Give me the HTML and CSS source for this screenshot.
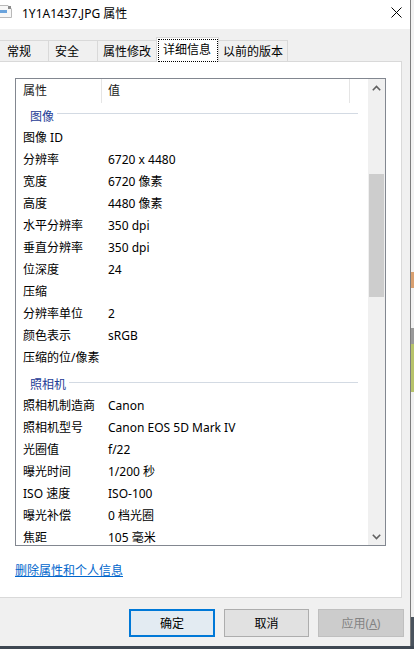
FILE: index.html
```html
<!DOCTYPE html>
<html lang="zh-CN">
<head>
<meta charset="utf-8">
<title>1Y1A1437.JPG 属性</title>
<link rel="stylesheet" href="styles.css">
</head>
<body>
<div class="screen">
  <div class="window">
    <div class="dialog">
      <div class="titlebar">
        <svg class="ticon" width="14" height="13" viewBox="0 0 14 13">
          <path d="M0.5 0.5 H10 L13.5 4 V12.5 H0.5 Z" fill="#f7f7f7" stroke="#b9b9b9"/>
          <rect x="0" y="5" width="9" height="3" fill="#6aa3dc"/>
          <rect x="10" y="1" width="3" height="3" fill="#8a8a8a"/>
        </svg>
        <span class="title">1Y1A1437.JPG 属性</span>
        <svg class="close" width="11" height="11" viewBox="0 0 11 11">
          <path d="M0.5 0.5 L10.5 10.5 M10.5 0.5 L0.5 10.5" stroke="#000" stroke-width="1" fill="none"/>
        </svg>
      </div>
      <div class="client">
        <div class="tabs">
          <div class="tab t1">常规</div>
          <div class="tab t2">安全</div>
          <div class="tab t3">属性修改</div>
          <div class="tab sel"><span class="focus">详细信息</span></div>
          <div class="tab t5">以前的版本</div>
        </div>
        <div class="panel">
          <div class="list">
            <div class="list-body">
              <div class="hdr">
                <div class="hc1">属性</div>
                <div class="hc2">值</div>
              </div>
              <div class="group g1"><span>图像</span><i class="gline"></i></div>
              <div class="row"><span class="k">图像 ID</span><span class="v"></span></div>
              <div class="row"><span class="k">分辨率</span><span class="v">6720 x 4480</span></div>
              <div class="row"><span class="k">宽度</span><span class="v">6720 像素</span></div>
              <div class="row"><span class="k">高度</span><span class="v">4480 像素</span></div>
              <div class="row"><span class="k">水平分辨率</span><span class="v">350 dpi</span></div>
              <div class="row"><span class="k">垂直分辨率</span><span class="v">350 dpi</span></div>
              <div class="row"><span class="k">位深度</span><span class="v">24</span></div>
              <div class="row"><span class="k">压缩</span><span class="v"></span></div>
              <div class="row"><span class="k">分辨率单位</span><span class="v">2</span></div>
              <div class="row"><span class="k">颜色表示</span><span class="v">sRGB</span></div>
              <div class="row"><span class="k">压缩的位/像素</span><span class="v"></span></div>
              <div class="group g2"><span>照相机</span><i class="gline"></i></div>
              <div class="row"><span class="k">照相机制造商</span><span class="v">Canon</span></div>
              <div class="row"><span class="k">照相机型号</span><span class="v">Canon EOS 5D Mark IV</span></div>
              <div class="row"><span class="k">光圈值</span><span class="v">f/22</span></div>
              <div class="row"><span class="k">曝光时间</span><span class="v">1/200 秒</span></div>
              <div class="row"><span class="k">ISO 速度</span><span class="v">ISO-100</span></div>
              <div class="row"><span class="k">曝光补偿</span><span class="v">0 档光圈</span></div>
              <div class="row"><span class="k">焦距</span><span class="v">105 毫米</span></div>
            </div>
            <div class="scroll">
              <div class="sbtn">
                <svg width="9" height="6" viewBox="0 0 9 6"><path d="M0.8 5.2 L4.5 1.5 L8.2 5.2" stroke="#606060" stroke-width="1.6" fill="none"/></svg>
              </div>
              <div class="thumb"></div>
              <div class="sbtn">
                <svg width="9" height="6" viewBox="0 0 9 6"><path d="M0.8 0.8 L4.5 4.5 L8.2 0.8" stroke="#606060" stroke-width="1.6" fill="none"/></svg>
              </div>
            </div>
          </div>
          <a class="link" href="#">删除属性和个人信息</a>
        </div>
        <div class="buttons">
          <div class="btn ok">确定</div>
          <div class="btn cancel">取消</div>
          <div class="btn apply">应用(<u>A</u>)</div>
        </div>
      </div>
    </div>
    <div class="desk"></div>
  </div>
  <div class="taskbar"></div>
</div>
</body>
</html>
```

FILE: styles.css
```css
* { box-sizing: border-box; }
html, body { margin: 0; padding: 0; }
body {
  width: 414px;
  height: 649px;
  overflow: hidden;
  font-family: "Noto Sans", "Noto Sans CJK SC", sans-serif;
  font-size: 12px;
  color: #000;
  background: #eeeeee;
}
.screen { display: flex; flex-direction: column; width: 414px; height: 649px; }
.window { display: flex; height: 646px; }
.dialog {
  width: 411px;
  height: 646px;
  border-right: 1px solid #7d7d7d;
  display: flex;
  flex-direction: column;
  background: #f0f0f0;
}
.desk {
  flex: 1;
  background: linear-gradient(to bottom,
    #f2f2f2 0, #f2f2f2 272px, #d9a070 272px, #d9a070 288px,
    #f2f2f2 288px, #f2f2f2 328px, #9a9a9a 328px, #9a9a9a 344px,
    #b7c36a 344px, #b7c36a 392px, #f0f0f0 392px, #f0f0f0 617px,
    #4a535d 617px);
}
.taskbar { height: 3px; background: #3e4752; }

/* title bar */
.titlebar {
  height: 29px;
  background: #fff;
  display: flex;
  align-items: flex-start;
  flex: none;
}
.ticon { margin-left: -2px; margin-top: 5px; flex: none; }
.title { margin-left: 10px; margin-top: 6px; line-height: 16px; }
.close { margin-left: auto; margin-right: 8px; margin-top: 7px; }

/* client */
.client { flex: 1; display: flex; flex-direction: column; }
.tabs {
  height: 32px;
  display: flex;
  align-items: flex-end;
  position: relative;
  z-index: 2;
  flex: none;
}
.tab {
  height: 21px;
  line-height: 18px;
  padding-top: 2px;
  border-top: 1px solid #d9d9d9;
  white-space: nowrap;
  background: #f0f0f0;
}
.t1 { width: 49px; padding-left: 7px; border-right: 1px solid #d9d9d9; }
.t2 { width: 49px; padding-left: 6px; border-right: 1px solid #d9d9d9; }
.t3 { width: 58px; padding-left: 5px; }
.t5 { width: 69px; padding-left: 4px; border-right: 1px solid #d9d9d9; }
.tab.sel {
  width: 63px;
  height: 25px;
  margin-bottom: -1px;
  background: #fff;
  border: 1px solid #d9d9d9;
  border-bottom: none;
  padding: 1px 0 0 1px;
}
.focus {
  display: block;
  width: 60px;
  height: 23px;
  border: 1px dotted #000;
  padding-left: 4px;
  padding-top: 2px;
  line-height: 16px;
}

/* panel */
.panel {
  height: 537px;
  margin-right: 8px;
  background: #fff;
  border: 1px solid #d9d9d9;
  border-left: none;
  padding-top: 16px;
  flex: none;
}
.list {
  margin-left: 15px;
  width: 371px;
  height: 468px;
  border: 1px solid #828790;
  display: flex;
}
.list-body { flex: 1; overflow: hidden; background: #fff; }
.hdr { display: flex; height: 24px; line-height: 22px; padding-top: 1px; color: #1a1a1a; }
.hc1 { width: 86px; padding-left: 7px; border-right: 1px solid #e5e5e5; margin-top: -1px; padding-top: 1px; }
.hc2 { width: 248px; padding-left: 6px; border-right: 1px solid #e5e5e5; margin-top: -1px; padding-top: 1px; }
.group {
  display: flex;
  align-items: center;
  padding-left: 14px;
  padding-bottom: 1px;
  line-height: 16px;
  color: #1e3c96;
}
.g1 { padding-top: 6px; }
.g2 { padding-top: 9px; }
.gline {
  flex: 1;
  height: 1px;
  background: #d3dae3;
  margin-left: 3px;
  margin-right: 10px;
}
.g1 .gline { margin-bottom: 7px; }
.g2 .gline { margin-bottom: 5px; }
.row { display: flex; height: 22px; line-height: 20px; padding-top: 2px; white-space: nowrap; }
.k { width: 86px; padding-left: 7px; flex: none; }
.v { padding-left: 6px; }

.scroll {
  width: 17px;
  flex: none;
  background: #f0f0f0;
  display: flex;
  flex-direction: column;
}
.sbtn {
  height: 17px;
  display: flex;
  align-items: center;
  justify-content: center;
  flex: none;
}
.scroll .thumb {
  margin: 78px 1px 0 1px;
  height: 123px;
  background: #cdcdcd;
  flex: none;
}
.scroll .thumb + .sbtn { margin-top: auto; }

.link {
  display: inline-block;
  margin-top: 17px;
  margin-left: 15px;
  line-height: 16px;
  color: #0066cc;
  text-decoration: underline;
}

/* buttons */
.buttons {
  display: flex;
  gap: 9px;
  padding-left: 129px;
  margin-top: 11px;
  flex: none;
}
.btn {
  height: 28px;
  display: flex;
  align-items: center;
  justify-content: center;
  line-height: 16px;
  padding-top: 2px;
}
.ok { width: 86px; border: 2px solid #0078d7; background: #e3ebf2; }
.cancel { width: 85px; border: 1px solid #adadad; background: #e1e1e1; }
.apply { width: 86px; border: 1px solid #bfbfbf; background: #cccccc; color: #838383; }
.apply u { text-decoration: underline; }
```
